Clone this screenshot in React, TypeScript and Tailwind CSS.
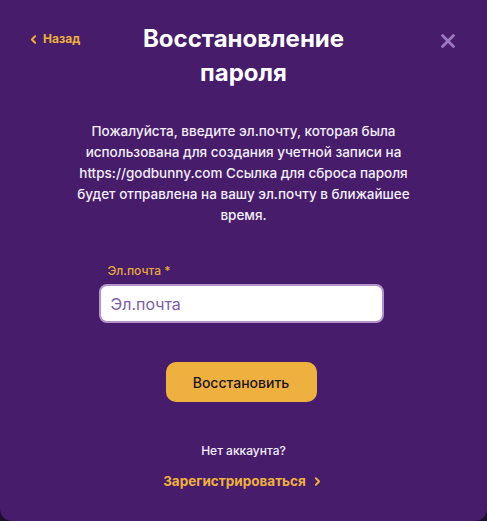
import { ChevronLeft, ChevronRight, X } from "lucide-react";

export default function App() {
  return (
    <div className="h-[521px] w-[487px] bg-[#1c0f2b]">
      <div
        className="relative flex h-[521px] w-[487px] flex-col items-center rounded-b-[12px] bg-[#461c6b] text-white"
        style={{ fontFamily: "Inter, 'Noto Sans', sans-serif" }}
      >
        <button className="absolute left-[27px] top-[30px] flex items-center gap-[3px] text-[12px] font-bold text-[#eeb13f]">
          <ChevronLeft size={13} strokeWidth={3.5} />
          Назад
        </button>
        <button className="absolute right-[28px] top-[30px] text-[#9c7cbf]">
          <X size={22} strokeWidth={3} />
        </button>

        <h1 className="mt-[22px] w-[240px] text-center text-[24px] font-bold leading-[34px]">
          Восстановление пароля
        </h1>

        <p className="mt-[31px] w-[350px] text-center text-[13.5px] font-medium leading-[21px] text-[#f3eef8]">
          Пожалуйста, введите эл.почту, которая была использована для создания учетной записи на
          https://godbunny.com Ссылка для сброса пароля будет отправлена на вашу эл.почту в
          ближайшее время.
        </p>

        <div className="mt-[37px] mr-[5px] flex w-[285px] flex-col">
          <label className="ml-[9px] text-[12px] font-medium leading-[16px] text-[#e8a93c]">
            Эл.почта *
          </label>
          <input
            placeholder="Эл.почта"
            className="mt-[5px] h-[39px] w-full rounded-[8px] border-2 border-[#b592c9] bg-white px-[10px] text-[16px] text-[#3a1d5a] outline-none placeholder:text-[#7e5ca8]"
          />
        </div>

        <button className="mt-[39px] mr-[5px] h-[40px] w-[151px] rounded-[10px] bg-[#eeb13f] text-[14px] font-medium text-[#1d1326]">
          Восстановить
        </button>

        <p className="mt-[40px] text-[12px] font-medium text-[#f3eef8]">Нет аккаунта?</p>

        <button className="mt-[11px] flex items-center gap-[5px] text-[13.5px] font-bold text-[#eeb13f]">
          Зарегистрироваться
          <ChevronRight size={13} strokeWidth={3.5} />
        </button>
      </div>
    </div>
  );
}
